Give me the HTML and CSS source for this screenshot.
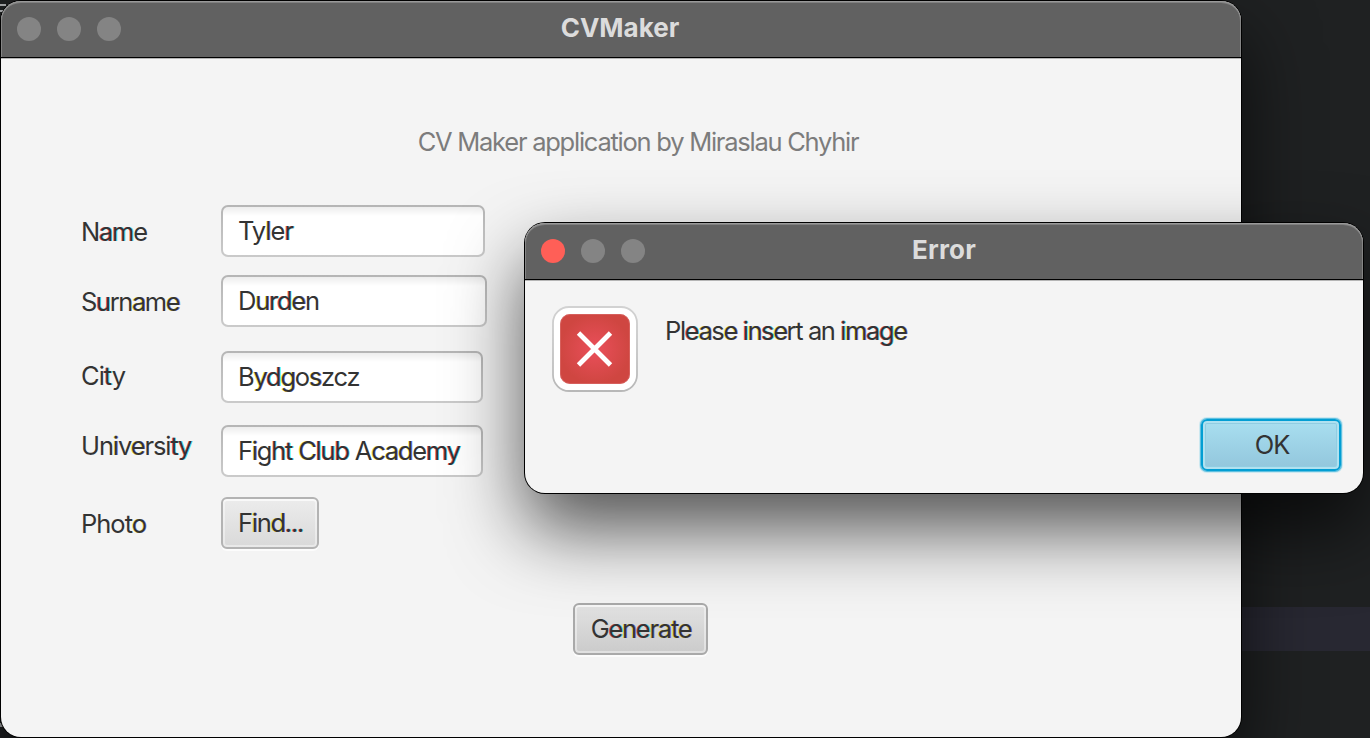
FILE: index.html
```html
<!DOCTYPE html>
<html lang="en">
<head>
<meta charset="utf-8">
<title>CVMaker</title>
<link rel="stylesheet" href="styles.css">
</head>
<body>
<div class="desktop">
  <div class="editor-line"></div>
  <div class="editor-mark mark-a"></div>
  <div class="editor-mark mark-b"></div>
  <div class="editor-mark mark-c"></div>

  <main class="window main-window">
    <header class="titlebar">
      <div class="lights"><i class="light"></i><i class="light"></i><i class="light"></i></div>
      <h1 class="title title-main">CVMaker</h1>
    </header>
    <div class="content">
      <p class="subtitle">CV Maker application by Miraslau Chyhir</p>
      <div class="form">
        <label class="label">N<span class="warm">am</span>e</label>
        <div class="field field-name"><span class="t-tyler">Ty<span class="cool">l</span>e<span class="warm">r</span></span></div>
        <label class="label t-surname">S<span class="warm">u</span>rn<span class="cool">a</span>m<span class="cool">e</span></label>
        <div class="field field-surname"><span>D<span class="cool">u</span><span class="warm">rd</span><span class="cool">e</span>n</span></div>
        <label class="label label-city">Ci<span class="warm">t</span>y</label>
        <div class="field"><span>B<span class="cool">y</span><span class="warm">d</span><span class="cool">g</span>o<span class="cool">s</span>zcz</span></div>
        <label class="label label-university">Un<span class="cool">i</span>v<span class="cool">e</span>rsi<span class="warm">ty</span></label>
        <div class="field"><span class="t-academy">F<span class="cool">i</span>g<span class="warm">ht</span> <span class="cool">C</span><span class="warm">lub</span> A<span class="cool">cad</span>e<span class="warm">my</span></span></div>
        <label class="label label-photo">Phot<span class="cool">o</span></label>
        <button class="button find">F<span class="cool">i</span>n<span class="cool">d</span><span class="warm">...</span></button>
      </div>
      <button class="button generate">G<span class="warm">e</span><span class="cool">n</span><span class="warm">e</span><span class="cool">rat</span><span class="cool">e</span></button>
    </div>
  </main>

  <section class="window dialog">
    <header class="titlebar">
      <div class="lights"><i class="light close"></i><i class="light"></i><i class="light"></i></div>
      <h2 class="title title-error">Error</h2>
    </header>
    <div class="dialog-body">
      <svg class="error-icon" viewBox="0 0 86 86" width="86" height="86">
        <defs>
          <radialGradient id="red"><stop offset="0" stop-color="#ea4f5a"/><stop offset="1" stop-color="#cf4641"/></radialGradient>
          <linearGradient id="rim" x1="0" y1="0" x2="0" y2="1"><stop offset="0" stop-color="#d2d2d2"/><stop offset="1" stop-color="#b8b8b8"/></linearGradient>
        </defs>
        <rect x="1" y="1" width="84" height="84" rx="16" fill="#fff" stroke="url(#rim)" stroke-width="1.8"/>
        <rect x="8" y="8" width="70" height="70" rx="10" fill="url(#red)"/>
        <rect x="8.5" y="8.5" width="69" height="69" rx="9.5" fill="none" stroke="#dc7472" stroke-opacity=".55"/>
        <path d="M26.5 27 58.5 59M58.5 27 26.5 59" stroke="#fff" stroke-width="4.8"/>
      </svg>
      <p class="message">Pl<span class="warm">e</span><span class="cool">a</span>s<span class="cool">e</span> <span class="warm">i</span><span class="cool">n</span><span class="warm">s</span><span class="cool">e</span>rt an <span class="warm">i</span><span class="cool">m</span><span class="warm">ag</span><span class="cool">e</span></p>
    </div>
    <footer class="actions"><button class="ok">OK</button></footer>
  </section>
</div>
</body>
</html>
```
FILE: styles.css
```css
* { box-sizing: border-box; }
body {
  margin: 0;
  overflow: hidden;
  font: 25.5px/30px Inter, "Liberation Sans", sans-serif;
  color: #333;
}
h1, h2, p { margin: 0; }
button { font: inherit; color: inherit; padding: 0; }
.desktop { position: relative; width: 1370px; height: 738px; overflow: hidden; background: #1f2122; }
.editor-line { position: absolute; left: 0; right: 0; top: 607px; height: 44px; background: #282832; }
.editor-mark { position: absolute; left: 0; background: #a9abad; }
.mark-a { top: 4px; width: 6px; height: 2px; }
.mark-b { top: 10px; width: 3px; height: 2px; }
.mark-c { top: 723px; width: 4px; height: 4px; }

.window { position: absolute; background: #f4f4f4; border-radius: 20px; display: flex; flex-direction: column; }
.main-window {
  left: 1px; top: 1px; width: 1240px; height: 736px;
  box-shadow: 0 0 0 1px #000, 0 36px 74px rgba(0,0,0,.67);
}
.dialog {
  left: 525px; top: 223px; width: 838px; height: 270px;
  box-shadow: 0 0 0 1px #000, 0 36px 74px rgba(0,0,0,.67);
}
.titlebar {
  display: grid;
  grid-template-columns: 120px 1fr 120px;
  align-items: center;
  flex: none;
  height: 57px;
  padding-bottom: 2px;
  background: #616161;
  border-radius: 20px 20px 0 0;
  border-bottom: 1px solid #000;
  box-shadow: inset 0 1px 0 #999, inset 0 2px 0 #808080, inset 1px 0 0 #858585, inset -1px 0 0 #858585, 0 1px 0 #b5b5b5;
}
.lights { display: flex; gap: 16px; padding: 1px 0 0 16px; }
.light { width: 24px; height: 24px; border-radius: 50%; background: #848484; }
.close { background: #ff5f57; }
.title { text-align: center; font-size: 26px; line-height: 30px; font-weight: 700; color: #dcdcdc; }
.title-main { padding-right: 2px; }
.title-error { letter-spacing: .2px; }

.content { display: flex; flex-direction: column; flex: 1; letter-spacing: -1.25px; }
.subtitle { margin: 69px 0 0 34px; text-align: center; color: #7c7c7c; white-space: nowrap; }
.form {
  display: grid;
  grid-template-columns: 140px 266px;
  grid-template-rows: 70px 76px 74px 72px 52px;
  align-items: start;
  margin: 48px 0 0 80px;
}
.label { padding-top: 12px; white-space: nowrap; }
.label-city { padding-top: 10px; letter-spacing: -1px; }
.label-university { padding-top: 6px; letter-spacing: -1.1px; }
.label-photo { letter-spacing: -1px; }
.t-surname { letter-spacing: -1.4px; }
.t-tyler { letter-spacing: -1px; }
.t-academy { letter-spacing: -1.22px; }
.field {
  display: flex;
  align-items: center;
  width: 262px;
  height: 52px;
  padding: 0 0 1px 15px;
  border: 2px solid transparent;
  border-radius: 7px;
  background: linear-gradient(#ededed, #fff 9px) padding-box, linear-gradient(#b5b5b5, #cacaca) border-box;
  white-space: nowrap;
}
.field-name { width: 264px; }
.field-surname { width: 266px; }
.button {
  height: 52px;
  border: 2px solid #b3b3b3;
  border-radius: 6px;
  background: linear-gradient(#ececec, #d9d9d9);
  box-shadow: inset 0 0 0 2px rgba(255,255,255,.4), inset 0 2px 0 rgba(255,255,255,.5), 0 2px 0 rgba(255,255,255,.7);
  white-space: nowrap;
  letter-spacing: -1.25px;
}
.find { width: 98px; padding-left: 1px; }
.generate { width: 135px; margin: 54px 0 0 572px; padding-left: 1px; border-color: #a9a9a9; background: linear-gradient(#e2e2e2, #cbcbcb); }

.dialog-body { display: flex; align-items: flex-start; padding: 26px 0 0 27px; }
.message { margin: 10px 0 0 27px; white-space: nowrap; letter-spacing: -1.4px; }
.actions { display: flex; justify-content: flex-end; padding: 27px 22px 0 0; }
.ok {
  width: 140px; height: 52px;
  padding-left: 2px;
  border: 2px solid #039ed3;
  border-radius: 6px;
  background: linear-gradient(#a9dff0, #92c6dc);
  box-shadow: 0 0 0 1px #5fc0e0, 0 0 0 2px #cce8f0, inset 0 0 0 2px #b0e1f0, inset 0 0 0 3px #91cde2;
  letter-spacing: -1px;
}

/* Subpixel colour fringes on individual glyphs */
.warm { text-shadow: -.6px 0 0 rgba(255,0,40,.65), .6px 0 0 rgba(0,235,235,.75); }
.cool { text-shadow: -.6px 0 0 rgba(235,235,0,.75), .6px 0 0 rgba(50,30,240,.55); }
```
